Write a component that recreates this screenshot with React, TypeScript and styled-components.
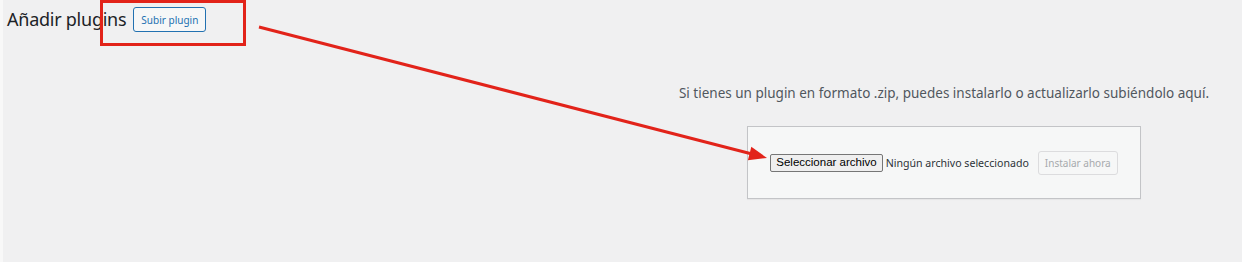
import React from "react";
import styled, { createGlobalStyle } from "styled-components";

const Global = createGlobalStyle`
  html, body { margin: 0; padding: 0; }
  body {
    background: #f0f0f1;
    font-family: "Noto Sans", "Open Sans", sans-serif;
    overflow: hidden;
  }
`;

const Page = styled.div`
  position: relative;
  width: 1242px;
  height: 262px;
  box-sizing: border-box;
  border-left: 3px solid #f8f8f8;
  background: #f0f0f1;
`;

const Header = styled.div`
  display: flex;
  align-items: center;
  gap: 7px;
  padding: 7px 0 0 4px;
  height: 25px;
`;

const Title = styled.h1`
  margin: 0;
  font-family: "Noto Sans", sans-serif;
  font-weight: 400;
  font-size: 18px;
  letter-spacing: -0.25px;
  color: #1d2327;
  line-height: 25px;
`;

const ActionButton = styled.button`
  box-sizing: border-box;
  height: 25px;
  padding: 0 7px;
  border: 1px solid #2271b1;
  border-radius: 3px;
  background: #f6f7f7;
  color: #2271b1;
  font-family: "Noto Sans", sans-serif;
  font-size: 10px;
  line-height: 1;
`;

const Upload = styled.section`
  display: flex;
  flex-direction: column;
  align-items: center;
  margin: 53px 0 0 643px;
`;

const Description = styled.p`
  margin: 0;
  font-family: "Noto Sans", sans-serif;
  font-size: 13.5px;
  line-height: 16px;
  color: #50575e;
`;

const UploadBox = styled.div`
  box-sizing: border-box;
  margin-top: 25px;
  width: 394px;
  height: 73px;
  display: flex;
  align-items: center;
  justify-content: center;
  background: #f6f7f7;
  border: 1px solid #c3c4c7;
  box-shadow: 0 1px 1px rgba(0, 0, 0, 0.04);
`;

const FileButton = styled.button`
  box-sizing: border-box;
  height: 18px;
  padding: 0 5px;
  border: 1px solid #767676;
  border-radius: 2px;
  background: #efefef;
  color: #000;
  font-family: "Liberation Sans", Arial, sans-serif;
  font-size: 11.5px;
  line-height: 1;
`;

const FileName = styled.span`
  margin-left: 3px;
  font-family: "Noto Sans", sans-serif;
  font-size: 10.6px;
  color: #2c3338;
`;

const InstallButton = styled.button`
  box-sizing: border-box;
  margin-left: 9px;
  height: 24px;
  padding: 0 6px;
  border: 1px solid #dcdcde;
  border-radius: 3px;
  background: #f6f7f7;
  color: #a7aaad;
  font-family: "Noto Sans", sans-serif;
  font-size: 10px;
  line-height: 1;
`;

const Annotation = styled.svg`
  position: absolute;
  left: -3px;
  top: 0;
  pointer-events: none;
`;

export default function App() {
  return (
    <>
      <Global />
      <Page>
        <Header>
          <Title>Añadir plugins</Title>
          <ActionButton type="button">Subir plugin</ActionButton>
        </Header>
        <Upload>
          <Description>
            Si tienes un plugin en formato .zip, puedes instalarlo o actualizarlo subiéndolo aquí.
          </Description>
          <UploadBox>
            <FileButton type="button">Seleccionar archivo</FileButton>
            <FileName>Ningún archivo seleccionado</FileName>
            <InstallButton type="button" disabled>
              Instalar ahora
            </InstallButton>
          </UploadBox>
        </Upload>
        <Annotation width="1242" height="262" viewBox="0 0 1242 262">
          <rect x="101.5" y="1.5" width="143" height="43" fill="none" stroke="#e2231a" strokeWidth="3" />
          <line x1="259" y1="27" x2="752" y2="154" stroke="#e2231a" strokeWidth="3" />
          <polygon points="767,158 751.3,146.7 747.9,160.3" fill="#e2231a" />
        </Annotation>
      </Page>
    </>
  );
}
